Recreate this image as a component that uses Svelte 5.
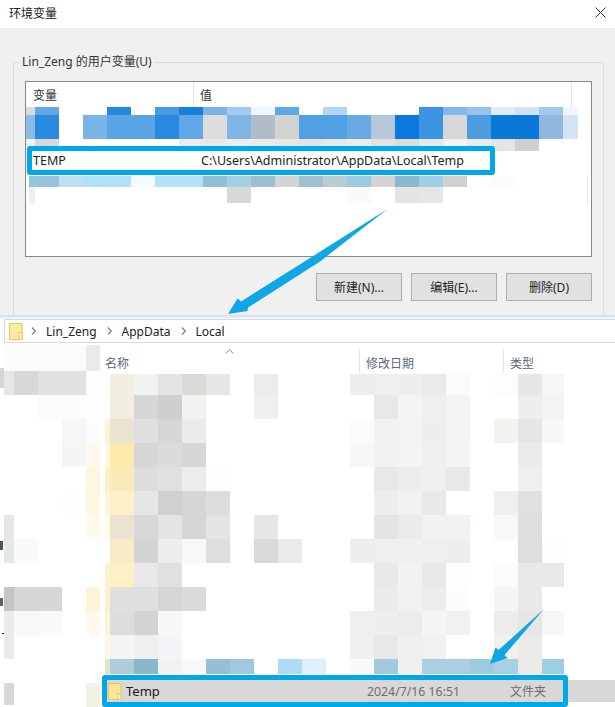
<script>
  const W = '';
  // Pixelated (redacted) rows of the variable list: columns are defined in CSS.
  const listRows = [
    { size: 8, c: ['#dddbd9','#dddbd9','#62a9e4',W,W,'#2588e0',W,'#4a9ae0','#1380dc','#7ab3e6','#a3caf0','#eff6fd','#5da8e6',W,'#b3d4f3',W,W,W,'#3a94e2','#84b8ea','#96c3ee','#e0edf9','#cfe3f6','#a0c9f0','#eff6fc'] },
    { size: 24, c: ['#8abce8','#8abce8','#2a8ae0',W,'#7ab5ea','#5aa5e6','#5aa5e6','#2a88e0','#62a8e8','#dcdcdc','#80b5e6','#b0bcc8','#d2d4d2','#52a0e4','#52a0e4','#6aaae4','#b4c8da','#0a78dc','#3a94e2','#d8d8d8','#509ce0','#0a78d8','#0a78d8','#90b8de','#d2e3f4'] },
    { size: 12, c: ['#f2f2f2','#f2f2f2','#d8d8d8',W,W,W,W,W,'#ececec','#e8e8e8','#ececec','#ebebeb','#e6e6e6','#e4e4e4','#e8e8e8','#ebebeb','#e2e2e2','#dcdcdc','#e8e8e8','#f3f3f3','#ebebeb','#e4e4e4','#d0d0ce',W,W] },
  ];
  const listRowsLow = [
    { size: 11, c: [W,'#8cc8e4','#96c4da','#bfe0ef','#b2e0f6','#b2e0f6','#f4fbfe','#b4e1f7','#b4e1f7','#92bfd4','#a2cfe2','#9cbfce','#d4d4d4','#a0bfd0','#b8ccd4','#9ccbe0','#d4d4d4','#8cb8d0','#a0cfe4','#d0d0d0',W,'#fbfbfe',W,W,W] },
    { size: 16, c: [W,'#eeeeee',W,W,W,W,W,W,W,W,'#d8d8d8',W,W,W,W,'#fafafa',W,'#e4e4e4','#e6e6e6',W,W,W,W,W,W] },
  ];

  // Pixelated rows of the explorer: keys are the columns of .ex-row.
  const cols = 'z a b c d e f g h i j k l m n o p q2 q r s t u v w x y'.split(' ');
  const exRows = [
    { size: 3, a:'#e6e6e6', b:'#d8d8d8', c:'#e2e2e2', d:'#e2e2e2', e:'#fdfdfd' },
    { size: 21, a:'#e6e6e6', b:'#d8d8d8', c:'#e2e2e2', d:'#e2e2e2', e:'#fdfdfd', h:'#f2eee0', i:'#f0f2f0', j:'#e4e4e4', k:'#dbdad7', l:'#e6e6e4', n:'#ececec', q:'#ededed', r:'#efefef', s:'#eeeeee', t:'#e9eaec', u:'#fbfbfb', w:'#fdfdfb', x:'#e6e7e9', y:'#f5f7f5' },
    { size: 24, c:'#fcfcfc', d:'#fcfcfc', e:'#fdfdfd', h:'#f1ede0', i:'#d6d6d6', j:'#cfcfd0', k:'#f1f3f1', n:'#efefee', r:'#e8e8e6', s:'#f4f4f4', t:'#efefef', u:'#f2f3f5', x:'#eeeeee', y:'#f2f3f3' },
    { size: 24, d:'#f5f6f8', e:'#fbfdfd', g:'#fdf3d0', h:'#e9e4d2', i:'#dfdfdf', j:'#d6d6d6', k:'#ebebeb', q:'#fcfcfc', r:'#f2f2f2', s:'#f3f3f3', t:'#eeeeee', u:'#f4f4f4', w:'#f2f2ef', x:'#e6e6e6', y:'#f6f7f9' },
    { size: 24, d:'#f5f5f6', e:'#fef9ee', g:'#fdf7e0', h:'#fce9ac', i:'#d6d6d6', j:'#dbdbdb', k:'#d6d6d6', q:'#f8f7f5', r:'#f3f2f0', s:'#f4f4f4', t:'#eeeff1', u:'#f4f6f4', x:'#ebebec' },
    { size: 24, e:'#fdf6e2', g:'#fdf0c8', h:'#f9ebb8', i:'#dedddc', j:'#e0e0e0', k:'#ebedec', l:'#fdfdfd', r:'#e8e8e8', s:'#ededed', t:'#f0f0ee', u:'#e8e8e8', x:'#efefed' },
    { size: 24, d:'#fefefe', e:'#fef7e4', g:'#fdf5dc', h:'#fdf0c8', i:'#e6e6e6', j:'#d0d0d0', k:'#d6d6d6', l:'#dcdddd', r:'#eeeeee', s:'#f0f2f0', t:'#e9e9e9', w:'#efefef', x:'#e0e0e0' },
    { size: 24, a:'#e6e7e9', e:'#fefbee', g:'#fefaea', h:'#e9e3cf', i:'#d8d8d8', j:'#e4e4e4', k:'#d6d6d6', l:'#e4e4e4', n:'#e6e6e6', r:'#e4e4e4', s:'#ebebeb', t:'#f1f3f1', u:'#f1f3f1', w:'#f8f8f8', x:'#dfdfdf' },
    { size: 24, a:'#e6e7e7', b:'#f8f9fb', h:'#f7ebc8', i:'#d4d4d4', j:'#ededed', k:'#f8f8f8', l:'#dedede', n:'#d8dad9', o:'#e9ebe9', q:'#eeeeee', r:'#efefef', s:'#eff0f2', t:'#f0efed', u:'#eeeeee', x:'#dedede', y:'#fdfdfd' },
    { size: 24, g:'#fdf3d0', h:'#fcf0c4', i:'#e8e8e8', j:'#dfe0e2', r:'#e9e9e9', s:'#f2f2f2', t:'#e9e8e6', u:'#fcfdfc', w:'#fbfbfb', x:'#e9e9e9', y:'#e9e8e8' },
    { size: 24, a:'#c4c5c6', b:'#d6d6d6', c:'#d6d6d6', e:'#fdf4d8', g:'#fdf0c8', h:'#dfdfdd', i:'#dfdfdf', j:'#d6d6d6', k:'#dbdad8', r:'#ebebeb', s:'#f2f2f2', t:'#ecedef', u:'#fcfcfc', w:'#f5f5f5', x:'#e9e9e9' },
    { size: 24, a:'#ebebeb', b:'#f7f9f7', c:'#f9f9f9', e:'#fef9ec', g:'#fdf3d8', h:'#dedddc', i:'#d4d4d4', j:'#f7f7f7', q:'#efefef', r:'#eeeeee', s:'#ececec', t:'#f4f6f4', u:'#f0f1f3', w:'#ececec', x:'#e6e6e6', y:'#f5f6f8' },
    { size: 24, a:'#e9ebea', g:'#fdf8e4', h:'#f5f4f3', i:'#efefef', j:'#f4f5f8', q:'#f0f0ee', r:'#e8e8e6', s:'#efefef', t:'#f1f1f1', w:'#f0f0f0', x:'#ebeae8' },
    { size: 15, g:'#dde4c8', h:'#b0ccdc', i:'#8ab6cc', j:'#f2f2f2', k:'#f8f8f8', l:'#94bfd4', m:'#9fcade', o:'#aedcf2', p:'#def1fa', q:'#fafafa', r:'#a4c9dd', s:'#f0f0f0', t:'#aacfe2', u:'#aacfe2', v:'#9ccbe0', w:'#a8d0e4', x:'#eceae8', y:'#9ccfe6' },
  ];
</script>

<div class="page">
  <section class="dialog">
    <header class="title">
      <span class="title-text">环境变量</span>
      <svg class="close" width="11" height="11" viewBox="0 0 11 11"><path d="M.5.5l10 10M10.5.5l-10 10" stroke="#2b2b2b" stroke-width="1" fill="none"/></svg>
    </header>
    <div class="group">
      <span class="legend">Lin_Zeng 的用户变量(U)</span>
      <div class="list">
        <div class="list-head">
          <span class="lh-name">变量</span>
          <span class="lh-value">值</span>
        </div>
        {#each listRows as row}
          <div class="lrow" style="height:{row.size}px">
            {#each row.c as col}<i style="background:{col || 'transparent'}"></i>{/each}
          </div>
        {/each}
        <div class="gap"></div>
        {#each listRowsLow as row}
          <div class="lrow" style="height:{row.size}px">
            {#each row.c as col}<i style="background:{col || 'transparent'}"></i>{/each}
          </div>
        {/each}
        <i class="scroll-edge"></i>
        <div class="hl-list">
          <span class="hl-name">TEMP</span>
          <span class="hl-value">C:\Users\Administrator\AppData\Local\Temp</span>
        </div>
      </div>
      <div class="actions">
        <button>新建(N)...</button>
        <button>编辑(E)...</button>
        <button>删除(D)</button>
      </div>
    </div>
  </section>

  <section class="explorer">
    <div class="addr">
      <svg class="folder" width="14" height="17" viewBox="0 0 14 17">
        <path d="M.5.5h12.6v16H.5z" fill="#ffe9a2" stroke="#e9c659"/>
        <path d="M10 9.5h3.1v7H10z" fill="#fff3c9" stroke="#e9c659"/>
      </svg>
      <svg class="chev" width="5" height="8" viewBox="0 0 5 8"><path d="M1 .5L4.2 4 1 7.5" fill="none" stroke="#8a8a8a" stroke-width="1.4"/></svg>
      <span class="crumb">Lin_Zeng</span>
      <svg class="chev" width="5" height="8" viewBox="0 0 5 8"><path d="M1 .5L4.2 4 1 7.5" fill="none" stroke="#8a8a8a" stroke-width="1.4"/></svg>
      <span class="crumb">AppData</span>
      <svg class="chev" width="5" height="8" viewBox="0 0 5 8"><path d="M1 .5L4.2 4 1 7.5" fill="none" stroke="#8a8a8a" stroke-width="1.4"/></svg>
      <span class="crumb">Local</span>
    </div>

    <div class="ex-head">
      <div class="ex-blur"><i></i></div>
      <div class="col col-name">名称
        <svg class="sort" width="9" height="5" viewBox="0 0 9 5"><path d="M.7 4.5L4.5.8l3.8 3.7" fill="none" stroke="#8a8a8a"/></svg>
      </div>
      <div class="col col-date">修改日期</div>
      <div class="col col-type">类型</div>
    </div>

    {#each exRows as row}
      <div class="ex-row" style="height:{row.size}px">
        {#each cols as k}<i style="background:{row[k] || 'transparent'}"></i>{/each}
      </div>
    {/each}

    <div class="temp-row">
      <i class="t-a"></i>
      <i class="t-e"></i>
      <div class="t-sel">
        <svg class="folder2" width="14" height="17" viewBox="0 0 14 17">
          <path d="M.5.5h12.6v16H.5z" fill="#ffe49a" stroke="#e9c659"/>
          <path d="M10 10.5h3.1v6H10z" fill="#fff3c9" stroke="#e9c659"/>
        </svg>
        <span class="t-name">Temp</span>
        <span class="t-date">2024/7/16 16:51</span>
        <span class="t-type">文件夹</span>
      </div>
    </div>
    <div class="hl-ex"></div>
  </section>

  <i class="frag f1"></i>
  <i class="frag f2"></i>
  <i class="frag f3"></i>
  <i class="frag f4"></i>

  <svg class="arrows" width="615" height="707" viewBox="0 0 615 707">
    <path d="M387.500 209L320 261.500 248 307.500l-.5 3.500L228 314l9.500-15.500 3.500 3 73-46z" fill="#0fa6e6"/>
    <path d="M544 609L504.500 655l3 3L490 664l5.500-16.500 3 2.500z" fill="#0fa6e6"/>
  </svg>
</div>

<style>
  :global(body) {
    margin: 0;
    background: #fff;
  }
  .page {
    position: relative;
    width: 615px;
    height: 707px;
    overflow: hidden;
    font-family: "Noto Sans", "Noto Sans CJK SC", sans-serif;
    color: #1a1a1a;
  }
  i {
    display: block;
  }
  .dialog {
    height: 315px;
    background: #f0f0f0;
    overflow: hidden;
  }
  .title {
    height: 28px;
    background: #fff;
    display: flex;
    align-items: center;
    justify-content: space-between;
    padding: 0 9px;
    font-size: 12px;
  }
  .title-text {
    margin-top: -2px;
  }
  .close {
    margin-top: -3px;
  }
  .group {
    position: relative;
    margin: 34px 11px 0 13px;
    height: 300px;
    box-sizing: border-box;
    border: 1px solid #dcdcdc;
    padding: 18px 11px 0 11px;
  }
  .legend {
    position: absolute;
    top: -10px;
    left: 6px;
    background: #f0f0f0;
    padding: 0 2px;
    font-size: 12px;
    line-height: 18px;
    color: #333;
  }
  .list {
    position: relative;
    height: 176px;
    box-sizing: border-box;
    border: 1px solid #828790;
    background: #fff;
  }
  .list-head {
    height: 25px;
    display: flex;
    font-size: 12px;
    line-height: 28px;
    color: #333;
  }
  .lh-name {
    width: 168px;
    padding-left: 7px;
    box-sizing: border-box;
    border-right: 1px solid #e4e4e4;
  }
  .lh-value {
    width: 378px;
    padding-left: 6px;
    box-sizing: border-box;
    border-right: 1px solid #e4e4e4;
  }
  .lrow {
    display: grid;
    grid-template-columns: 3px 6px repeat(22, 24px) 15px;
  }
  .gap {
    height: 25px;
  }
  .scroll-edge {
    position: absolute;
    left: 561px;
    top: 94px;
    width: 1px;
    height: 27px;
    background: #e8e8e8;
  }
  .hl-list {
    position: absolute;
    left: 1px;
    top: 64px;
    width: 468px;
    height: 29px;
    box-sizing: border-box;
    border: 5px solid #00a8ea;
    border-radius: 3px;
    background: #fff;
    font-size: 12.5px;
    display: flex;
    align-items: center;
    line-height: 18px;
    color: #222;
  }
  .hl-name {
    margin-left: 1px;
    width: 168px;
  }
  .actions {
    display: flex;
    justify-content: flex-end;
    gap: 9px;
    margin-top: 16px;
  }
  button {
    width: 86px;
    height: 28px;
    padding: 0;
    background: #e1e1e1;
    border: 1px solid #adadad;
    font: inherit;
    font-size: 12px;
    color: #222;
  }
  .explorer {
    position: relative;
    height: 392px;
    box-sizing: border-box;
    padding-top: 4px;
    background: linear-gradient(#cfe0f4, #dbe8f7 2px, #fff 4px);
  }
  .addr {
    margin-left: 4px;
    height: 24px;
    box-sizing: border-box;
    border: 1px solid #d9d9d9;
    border-right: 0;
    display: flex;
    align-items: center;
    padding-left: 4px;
    font-size: 12px;
    color: #222;
  }
  .folder {
    margin-right: 8px;
  }
  .chev {
    flex: none;
  }
  .crumb {
    margin: 0 10px;
  }
  .ex-head {
    position: relative;
    height: 28px;
    display: flex;
    font-size: 12px;
    color: #5a6a7c;
  }
  .ex-blur {
    margin: 2px 0 0 4px;
    width: 96px;
    background: #fbfbfb;
    display: flex;
    justify-content: flex-end;
  }
  .ex-blur i {
    width: 14px;
    background: #e9eaee;
  }
  .col {
    margin-top: 6px;
    box-sizing: border-box;
    line-height: 30px;
    height: 24px;
    border-right: 1px solid #e5e5e5;
  }
  .col-name {
    width: 260px;
    padding-left: 5px;
  }
  .col-date {
    width: 144px;
    padding-left: 6px;
  }
  .col-type {
    border: 0;
    padding-left: 6px;
  }
  .sort {
    position: absolute;
    left: 225px;
    top: 6px;
  }
  .ex-row {
    display: grid;
    grid-template-columns: 4px 10px 24px 24px 24px 14px 5px 5px repeat(8, 24px) 24px 24px repeat(5, 24px) 24px 24px 24px 22px;
  }
  .temp-row {
    position: relative;
    margin-top: 6px;
    height: 22px;
    display: flex;
  }
  .t-a {
    position: absolute;
    left: 4px;
    top: 3px;
    width: 10px;
    height: 22px;
    background: #d8d8d8;
  }
  .t-e {
    position: absolute;
    left: 86px;
    top: 3px;
    width: 14px;
    height: 24px;
    background: #f3f0e6;
  }
  .t-sel {
    margin-left: 107px;
    flex: 1;
    background: #d8d8d8;
    display: flex;
    align-items: center;
    font-size: 13px;
    padding-left: 1px;
  }
  .t-name {
    margin-left: 4px;
    width: 241px;
  }
  .t-date {
    width: 143px;
    font-size: 12.3px;
    color: #6d6d6d;
  }
  .t-type {
    font-size: 12px;
    color: #6d6d6d;
  }
  .hl-ex {
    position: absolute;
    left: 102px;
    top: 360px;
    width: 466px;
    height: 32px;
    box-sizing: border-box;
    border: 5px solid #00a8ea;
    border-radius: 3px;
  }
  .frag {
    position: absolute;
  }
  .f1 {
    left: 0;
    top: 368px;
    width: 4px;
    height: 20px;
    background: #d6d6d6;
  }
  .f2 {
    left: 0;
    top: 541px;
    width: 3px;
    height: 9px;
    background: #4a5560;
  }
  .f3 {
    left: 0;
    top: 598px;
    width: 3px;
    height: 8px;
    background: #5a6470;
  }
  .f4 {
    left: 2px;
    top: 633px;
    width: 2px;
    height: 1px;
    background: #222;
  }
  .arrows {
    position: absolute;
    left: 0;
    top: 0;
    pointer-events: none;
  }
</style>
